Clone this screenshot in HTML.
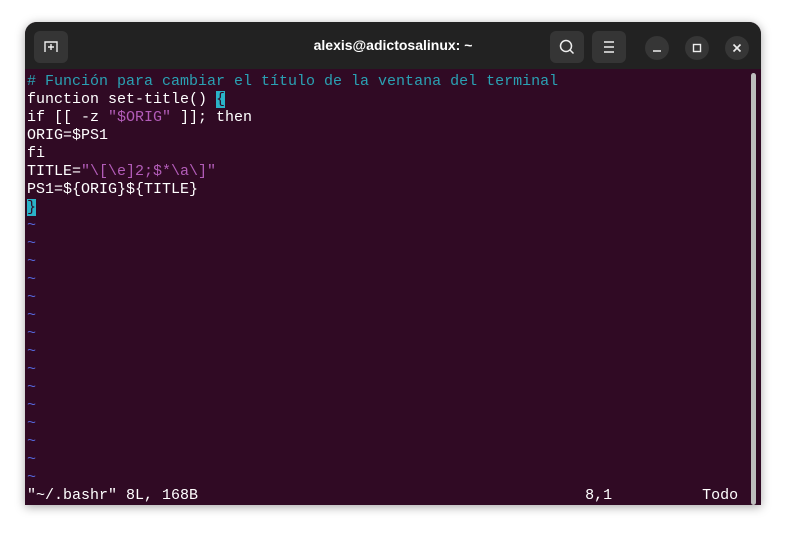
<!DOCTYPE html>
<html><head><meta charset="utf-8"><style>
html,body{margin:0;padding:0;width:786px;height:533px;background:#fff;overflow:hidden;}
.win{position:absolute;left:25px;top:22px;width:736px;height:483px;background:#300a24;border-radius:12px 12px 0 0;overflow:hidden;box-shadow:0 2px 10px rgba(0,0,0,.35);}
.hdr{position:absolute;left:0;top:0;width:736px;height:47px;background:#222222;}
.btn{position:absolute;top:9px;width:34px;height:32px;background:#353535;border-radius:6px;}
.cb{position:absolute;top:14px;width:24px;height:24px;background:#363636;border-radius:50%;}
.title{position:absolute;left:0;width:736px;top:15px;text-align:center;color:#fff;font:bold 14px "Liberation Sans",sans-serif;}
.term{position:absolute;left:2px;top:51px;font:15px/18px "Liberation Mono",monospace;color:#fff;white-space:pre;letter-spacing:0px;}
.c{color:#2aa1b3}.s{color:#b25cb8}.t{color:#5565d9}
.cur{background:#2ab3c8;color:#300a24}
.sb{position:absolute;left:726px;top:51px;width:5px;height:432px;background:#bdbdbd;border-radius:3px;}
</style></head><body>
<div class="win">
<div class="hdr">
<div class="btn" style="left:9px"><svg width="34" height="32"><path d="M11 21V11h12v10M14 16h6M17 13v6" fill="none" stroke="#eee" stroke-width="1.4"/></svg></div>
<div class="title">alexis@adictosalinux: ~</div>
<div class="btn" style="left:525px"><svg width="34" height="32"><circle cx="16" cy="15" r="5.5" fill="none" stroke="#eee" stroke-width="1.5"/><path d="M20 19l3.5 3.5" stroke="#eee" stroke-width="1.5"/></svg></div>
<div class="btn" style="left:567px"><svg width="34" height="32"><path d="M12 11h10M12 16h10M12 21h10" stroke="#eee" stroke-width="1.4"/></svg></div>
<div class="cb" style="left:620px"><svg width="24" height="24"><path d="M8 15h8" stroke="#eee" stroke-width="1.5"/></svg></div>
<div class="cb" style="left:660px"><svg width="24" height="24"><rect x="8.5" y="8.5" width="7" height="7" fill="none" stroke="#eee" stroke-width="1.4"/></svg></div>
<div class="cb" style="left:700px"><svg width="24" height="24"><path d="M8.5 8.5l7 7M15.5 8.5l-7 7" stroke="#eee" stroke-width="1.6"/></svg></div>
</div>
<div class="term"><span class="c"># Función para cambiar el título de la ventana del terminal</span>
function set-title() <span class="cur">{</span>
if [[ -z <span class="s">"$ORIG"</span> ]]; then
ORIG=$PS1
fi
TITLE=<span class="s">"\[\e]2;$*\a\]"</span>
PS1=${ORIG}${TITLE}
<span class="cur">}</span>
<span class="t">~
~
~
~
~
~
~
~
~
~
~
~
~
~
~</span>
"~/.bashr" 8L, 168B                                           8,1          Todo</div>
<div class="sb"></div>
</div>
</body></html>
